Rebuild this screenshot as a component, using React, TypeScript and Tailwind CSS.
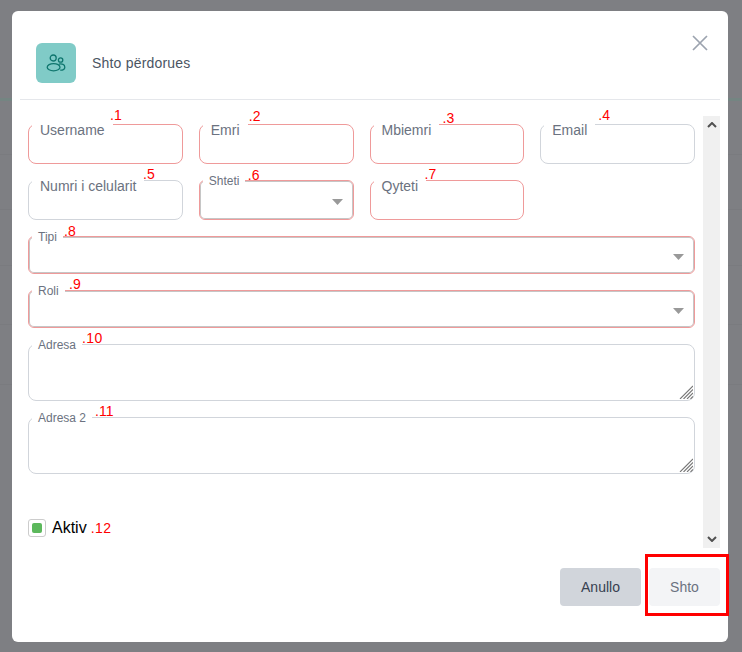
import React from "react";

type FieldProps = {
  label: string;
  note: string;
  noteClass: string;
  required?: boolean;
  className?: string;
};

const fontClass = "font-['Liberation_Sans',Arial,sans-serif]";

const Note = ({ text, className }: { text: string; className: string }) => (
  <span className={`absolute z-10 text-sm leading-4 text-[#ff0000] ${className}`}>{text}</span>
);

const TextField = ({ label, note, noteClass, required, className }: FieldProps) => (
  <div className={`relative ${className ?? ""}`}>
    <input
      className={`block h-10 w-full rounded-lg border bg-white ${required ? "border-[#ef9a9a]" : "border-[#d1d5db]"}`}
    />
    <label className="absolute left-1 top-[-4px] bg-white px-2 text-sm leading-5 text-[#6b7280]">{label}</label>
    <Note text={note} className={noteClass} />
  </div>
);

const SelectField = ({ label, note, noteClass, className }: FieldProps) => (
  <div className={`relative ${className ?? ""}`}>
    <select className="block h-full w-full appearance-none rounded-md border border-[#ef9a9a] bg-white shadow-[inset_0_0_0_1px_#c6c6c6]" />
    <svg className="absolute right-[11px] top-1/2 mt-[-1px]" width="11" height="6" viewBox="0 0 11 6">
      <path d="M0 0h11L5.5 6z" fill="#999999" />
    </svg>
    <label className="absolute left-1 top-[-7px] bg-white px-1.5 text-xs leading-4 text-[#6b7280]">{label}</label>
    <Note text={note} className={noteClass} />
  </div>
);

const AreaField = ({ label, note, noteClass, className }: FieldProps) => (
  <div className={`relative ${className ?? ""}`}>
    <textarea className="block h-[57px] w-full resize-none rounded-lg border border-[#d1d5db] bg-white" />
    <svg className="pointer-events-none absolute bottom-[2px] right-[2px]" width="14" height="14" viewBox="0 0 14 14" stroke="#777777" strokeWidth="1.1">
      <path d="M1 14L14 1M4.5 14L14 4.5M8 14L14 8M11.5 14L14 11.5" />
    </svg>
    <label className="absolute left-1 top-[-7px] bg-white px-1.5 text-xs leading-4 text-[#6b7280]">{label}</label>
    <Note text={note} className={noteClass} />
  </div>
);

const UsersIcon = () => (
  <svg width="20" height="20" viewBox="0 0 20 20" fill="none" stroke="#0f766e" strokeWidth="1.3">
    <circle cx="7.2" cy="5" r="3" />
    <circle cx="14.6" cy="7" r="2.2" />
    <ellipse cx="7.6" cy="14.2" rx="6.4" ry="3.6" />
    <path d="M13 11.2c3-.7 5.8.3 5.8 3 0 2-2 3-4.6 3" />
  </svg>
);

const App = () => {
  return (
    <div className={`relative h-[652px] w-[742px] overflow-hidden bg-[#7e7f83] ${fontClass}`}>
      {/* page behind the modal, only its table lines show */}
      <div className="flex flex-col">
        <div className="h-[98px]" />
        <div className="h-[3px] bg-[#748582]" />
        <div className="h-[54px] border-b border-[#7a7b7f]" />
        <div className="h-[55px] border-b border-[#7a7b7f]" />
        <div className="h-[56px] border-b border-[#7a7b7f]" />
        <div className="h-[59px] border-b border-[#7a7b7f]" />
        <div className="h-[60px] border-b border-[#7a7b7f]" />
      </div>

      <div className="absolute left-3 top-[11px] flex h-[631px] w-[716px] flex-col rounded-md bg-white">
        <div className="relative mx-2 flex items-center gap-4 border-b border-[#e5e7eb] px-4 pb-4 pt-8">
          <div className="flex h-10 w-10 items-center justify-center rounded-md bg-[#80cbc7]">
            <UsersIcon />
          </div>
          <h2 className="text-sm tracking-[0.2px] text-[#4b5563]">Shto përdorues</h2>
          <button className="absolute right-[12px] top-[24px] text-[#9ca3af]">
            <svg className="block" width="16" height="16" viewBox="0 0 16 16" fill="none" stroke="currentColor" strokeWidth="1.7">
              <path d="M1 1l14 14M15 1L1 15" />
            </svg>
          </button>
        </div>

        <div className="mx-2 mt-4 flex h-[432px]">
          <div className="flex-1 px-2 pt-2">
            <div className="grid grid-cols-4 gap-4">
              <TextField label="Username" note=".1" noteClass="left-[82px] top-[-17px]" required />
              <TextField label="Emri" note=".2" noteClass="left-[50px] top-[-16px]" required />
              <TextField label="Mbiemri" note=".3" noteClass="left-[73px] top-[-14px]" required />
              <TextField label="Email" note=".4" noteClass="left-[58px] top-[-17px]" />
              <TextField label="Numri i celularit" note=".5" noteClass="left-[115px] top-[-14px]" />
              <SelectField label="Shteti" note=".6" noteClass="left-[49px] top-[-13px]" className="h-10" />
              <TextField label="Qyteti" note=".7" noteClass="left-[55px] top-[-14px]" required />
              <div />
              <SelectField label="Tipi" note=".8" noteClass="left-[36px] top-[-13px]" className="col-span-4 h-[38px]" />
              <SelectField label="Roli" note=".9" noteClass="left-[41px] top-[-14px]" className="col-span-4 h-[38px]" />
              <AreaField label="Adresa" note=".10" noteClass="left-[54px] top-[-14px] tracking-[0.4px]" className="col-span-4" />
              <AreaField label="Adresa 2" note=".11" noteClass="left-[67px] top-[-14px]" className="col-span-4" />
            </div>
            <div className="mt-[45px] flex items-center gap-1.5">
              <span className="flex h-[18px] w-[18px] items-center justify-center rounded-[3px] border border-[#cccccc] bg-white">
                <span className="h-2.5 w-2.5 rounded-[2px] bg-[#5cb85c]" />
              </span>
              <div className="flex items-center gap-1">
                <span className="text-base leading-[18px] text-black">Aktiv</span>
                <span className="text-sm leading-4 tracking-[0.4px] text-[#ff0000]">.12</span>
              </div>
            </div>
          </div>

          <div className="flex w-[17px] flex-col items-center justify-between bg-[#f0f0f0] py-1.5">
            <svg width="10" height="6" viewBox="0 0 10 6" fill="none" stroke="#505050" strokeWidth="2">
              <path d="M1 5l4-4 4 4" />
            </svg>
            <svg width="10" height="6" viewBox="0 0 10 6" fill="none" stroke="#505050" strokeWidth="2">
              <path d="M1 1l4 4 4-4" />
            </svg>
          </div>
        </div>

        <div className="mx-2 mt-5 flex justify-end gap-2">
          <button className="h-[38px] w-[81px] rounded-sm bg-[#d1d5db] text-sm text-[#374151]">Anullo</button>
          <button className="h-[38px] w-[71px] rounded-sm bg-[#f3f4f6] text-sm text-[#6b7280]">Shto</button>
        </div>

        {/* highlight drawn on top of the screenshot */}
        <div className="absolute left-[633px] top-[543px] h-[62px] w-[84px] border-[3px] border-[#ff0000]" />
      </div>
    </div>
  );
};

export default App;
